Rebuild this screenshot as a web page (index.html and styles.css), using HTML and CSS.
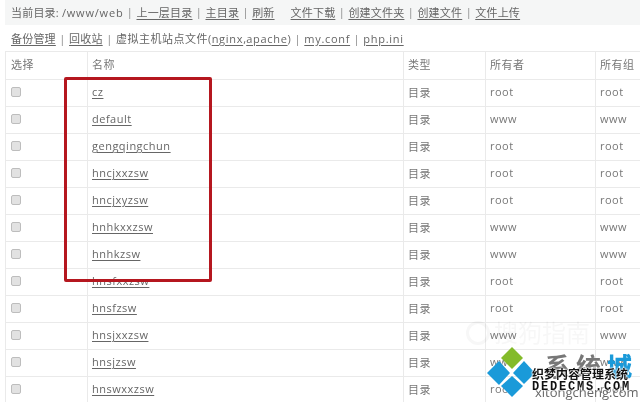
FILE: index.html
```html
<!DOCTYPE html>
<html lang="zh">
<head>
<meta charset="utf-8">
<title>文件管理</title>
<link rel="stylesheet" href="styles.css">
</head>
<body>
<div class="page">
  <div class="bar bar-top">
    <span>当前目录: <span class="path">/www/web</span></span><i>|</i><a>上一层目录</a><i>|</i><a>主目录</a><i>|</i><a>刷新</a>
    <a class="gap">文件下载</a><i>|</i><a>创建文件夹</a><i>|</i><a>创建文件</a><i>|</i><a>文件上传</a>
  </div>
  <div class="bar bar-sub">
    <a>备份管理</a><i>|</i><a>回收站</a><i>|</i><span class="wide">虚拟主机站点文件(</span><a class="lat">nginx</a><span>,</span><a class="lat">apache</a><span>)</span><i>|</i><a class="lat">my.conf</a><i>|</i><a class="lat">php.ini</a>
  </div>
  <table class="files">
    <colgroup><col class="c1"><col class="c2"><col class="c3"><col class="c4"><col class="c5"></colgroup>
    <thead><tr><th>选择</th><th>名称</th><th>类型</th><th>所有者</th><th>所有组</th></tr></thead>
    <tbody>
      <tr><td><span class="box"></span></td><td><a>cz</a></td><td>目录</td><td>root</td><td>root</td></tr>
      <tr><td><span class="box"></span></td><td><a>default</a></td><td>目录</td><td>www</td><td>www</td></tr>
      <tr><td><span class="box"></span></td><td><a>gengqingchun</a></td><td>目录</td><td>root</td><td>root</td></tr>
      <tr><td><span class="box"></span></td><td><a>hncjxxzsw</a></td><td>目录</td><td>root</td><td>root</td></tr>
      <tr><td><span class="box"></span></td><td><a>hncjxyzsw</a></td><td>目录</td><td>root</td><td>root</td></tr>
      <tr><td><span class="box"></span></td><td><a>hnhkxxzsw</a></td><td>目录</td><td>www</td><td>www</td></tr>
      <tr><td><span class="box"></span></td><td><a>hnhkzsw</a></td><td>目录</td><td>www</td><td>www</td></tr>
      <tr><td><span class="box"></span></td><td><a>hnsfxxzsw</a></td><td>目录</td><td>root</td><td>root</td></tr>
      <tr><td><span class="box"></span></td><td><a>hnsfzsw</a></td><td>目录</td><td>root</td><td>root</td></tr>
      <tr><td><span class="box"></span></td><td><a>hnsjxxzsw</a></td><td>目录</td><td>www</td><td>www</td></tr>
      <tr><td><span class="box"></span></td><td><a>hnsjzsw</a></td><td>目录</td><td>www</td><td>www</td></tr>
      <tr><td><span class="box"></span></td><td><a>hnswxxzsw</a></td><td>目录</td><td>root</td><td>root</td></tr>
    </tbody>
  </table>
  <div class="highlight"></div>
  <div class="sogou"><span class="sogou-mark"></span>搜狗指南</div>
  <div class="brand">
    <svg class="brand-logo" viewBox="0 0 48 50" width="48" height="50" aria-hidden="true">
      <polygon points="25,0 36,11 25,22 14,11" fill="#83bb2a"/>
      <polygon points="12,14 23,26 12,38 0,26" fill="#1a9ad9"/>
      <polygon points="37,14 48,26 37,37 26,26" fill="#1a9ad9"/>
      <polygon points="25,29 36,39 25,50 14,39" fill="#1a9ad9"/>
    </svg>
    <div class="brand-sys">系统<b>城</b></div>
    <div class="brand-url">xitongcheng.com</div>
    <div class="brand-cn">织梦内容管理系统</div>
    <div class="brand-en">DEDECMS.COM</div>
  </div>
</div>
</body>
</html>
```
FILE: styles.css
```css
html, body { margin: 0; padding: 0; }
body { background: #fff; font-family: "Open Sans", "Noto Sans CJK SC", sans-serif; color: #666; }
.page { position: relative; width: 640px; height: 402px; overflow: hidden; padding-left: 5px; box-sizing: border-box; filter: blur(.35px); }
.bar { display: flex; align-items: center; white-space: nowrap; font-size: 11px; padding-left: 6px; box-sizing: border-box; letter-spacing: .2px; padding-bottom: 2px; }
.bar a { color: #666; text-decoration: underline; text-underline-offset: 2px; }
.bar i { font-style: normal; margin: 0 3.4px; color: #888; }
.path { letter-spacing: .8px; }
.bar-top { height: 25px; background: #f5f6f6; }
.bar-sub { height: 27px; background: #fff; border-bottom: 1px solid #eee; padding-bottom: 0; }
.bar-sub i { margin: 0 3.5px; }
.bar-sub .wide { letter-spacing: .5px; }
.bar-sub .lat { letter-spacing: .7px; }
.gap { margin-left: 16px; }
.files { border-collapse: collapse; table-layout: fixed; width: 640px; font-size: 11px; letter-spacing: .5px; margin-top: -1px; }
.c1 { width: 82px; } .c2 { width: 316px; } .c3 { width: 82px; } .c4 { width: 110px; } .c5 { width: 50px; }
.files th, .files td { padding: 0 0 3px 4px; box-sizing: border-box; height: 27px; text-align: left; font-weight: 400; border: 1px solid #eaeaea; color: #777; overflow: hidden; white-space: nowrap; }
.files th { height: 28px; }
.files th:first-child, .files td:first-child { padding-left: 5px; }
.files th:last-child, .files td:last-child { border-right: 0; }
.files a { color: #666; text-decoration: underline; text-underline-offset: 2px; }
.box { display: block; width: 8px; height: 8px; margin-top: 1px; background: #e2e2e2; border: 1px solid #bdbdbd; border-radius: 2px; }
.highlight { position: absolute; left: 64px; top: 77px; width: 148px; height: 205px; box-sizing: border-box; border: 3px solid #b5171f; border-radius: 2px; }
.sogou { position: absolute; left: 466px; top: 318px; display: flex; align-items: center; gap: 4px; font-size: 24px; line-height: 30px; color: #000; opacity: .03; white-space: nowrap; }
.sogou-mark { width: 18px; height: 18px; border: 3px solid #000; border-radius: 50%; }
.brand { position: absolute; left: 486px; top: 347px; width: 154px; height: 55px; }
.brand-logo { position: absolute; left: 1px; top: 0; }
.brand-sys { position: absolute; left: 59px; top: 4px; font-size: 25px; line-height: 30px; font-weight: 700; color: #777; letter-spacing: 6px; white-space: nowrap; }
.brand-sys b { color: #1a9ad9; }
.brand-url { position: absolute; left: 49px; top: 36px; font-size: 13px; line-height: 18px; color: #666; white-space: nowrap; }
.brand-cn { position: absolute; left: 46px; top: 20px; font-size: 12px; line-height: 16px; font-weight: 700; color: #111; white-space: nowrap; text-shadow: 0 0 2px #fff, 0 0 2px #fff, 0 0 2px #fff; }
.brand-en { position: absolute; left: 46px; top: 32px; font-size: 12px; line-height: 16px; font-weight: 700; letter-spacing: 1.8px; color: #111; white-space: nowrap; text-shadow: 0 0 2px #fff, 0 0 2px #fff, 0 0 2px #fff; font-family: "Liberation Mono", monospace; }
```
